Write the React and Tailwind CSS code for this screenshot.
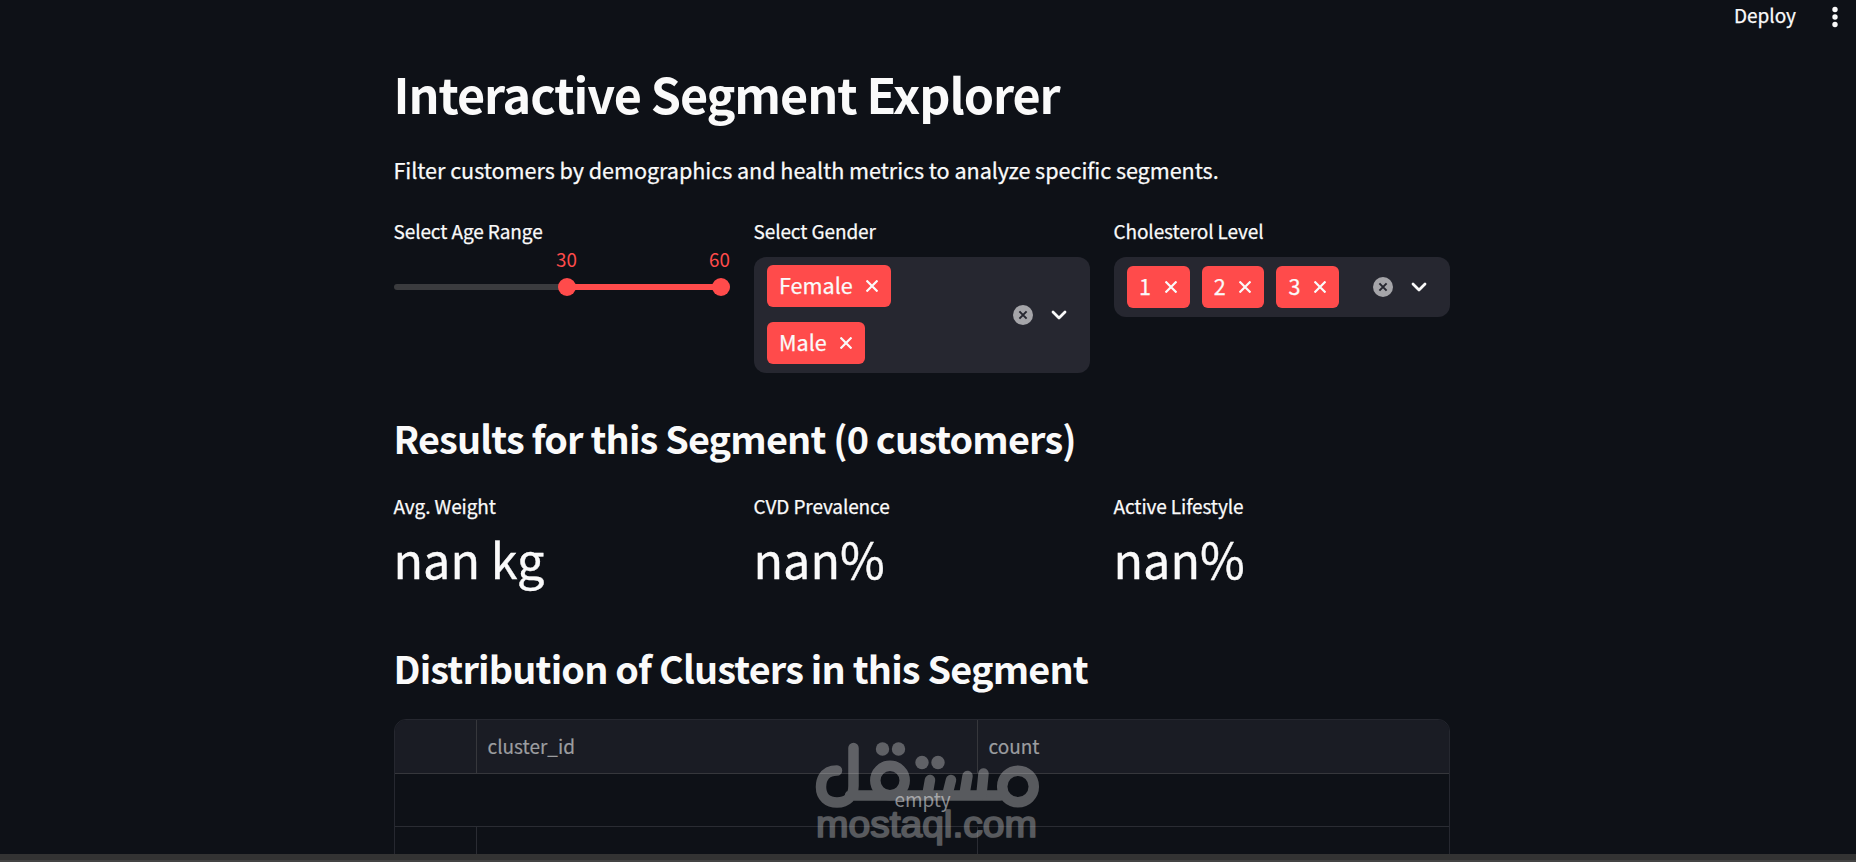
const SANS = "font-['Noto_Sans_CJK_SC','Noto_Sans',sans-serif]";

const genders = ['Female', 'Male'];
const levels = ['1', '2', '3'];
const metrics = [
  { label: 'Avg. Weight', value: 'nan kg' },
  { label: 'CVD Prevalence', value: 'nan%' },
  { label: 'Active Lifestyle', value: 'nan%' },
];

function Label({ children }) {
  return (
    <div className="-ml-[0.5px] h-[25px] text-[19px] leading-[25px] tracking-[-0.1px] whitespace-nowrap [-webkit-text-stroke:0.25px]">
      {children}
    </div>
  );
}

function Tag({ children }) {
  return (
    <span className="flex h-[42px] min-w-[62.7px] items-center justify-between gap-[13px] rounded-md bg-[#ff4b4b] pr-[13px] pl-3 text-[21.6px] [-webkit-text-stroke:0.25px]">
      <span className="h-[42px] leading-[40px]">{children}</span>
      <svg width="12" height="12" viewBox="0 0 12 12" stroke="currentColor" strokeWidth="2.2">
        <path d="M0.500 0.500l11 11M11.500 0.500L0.500 11.500" />
      </svg>
    </span>
  );
}

function SelectIcons() {
  return (
    <div className="flex shrink-0 items-center gap-[18px] pr-[23px]">
      <svg width="20" height="20" viewBox="0 0 20 20">
        <circle cx="10" cy="10" r="10" fill="#a5a5a9" />
        <path d="M6.4 6.4l7.2 7.2M13.6 6.4l-7.2 7.2" stroke="#262730" strokeWidth="2" />
      </svg>
      <svg width="16" height="10" viewBox="0 0 16 10" fill="none" stroke="currentColor" strokeWidth="2.8" strokeLinecap="round" strokeLinejoin="round">
        <path d="M2 2l6 6 6-6" />
      </svg>
    </div>
  );
}

function AgeSlider() {
  return (
    <div>
      <div className="relative h-[27px] text-[18.8px] leading-[25px] text-[#ff4b4b]">
        <span className="absolute -top-[11px] left-[162px]">30</span>
        <span className="absolute -top-[11px] left-[315px]">60</span>
      </div>
      <div className="relative flex h-1.5 rounded-full bg-[#3a3b3e]">
        <div className="ml-[173px] h-1.5 w-[154px] bg-[#ff4b4b]" />
        <span className="absolute -top-1.5 left-[164px] size-[18px] rounded-full bg-[#ff4b4b]" />
        <span className="absolute -top-1.5 left-[318px] size-[18px] rounded-full bg-[#ff4b4b]" />
      </div>
    </div>
  );
}

function Watermark() {
  return (
    <div className="absolute top-[740px] left-[814px] opacity-[0.34]">
      <svg width="226" height="106" viewBox="0 0 226 106" fill="none" stroke="#e6e6e6" strokeWidth="10.5" strokeLinecap="round" strokeLinejoin="round">
        <path d="M23 30.500C8 30.500 7 43 7 47C7 57 14 62.500 23 62.500C33 62.500 39.500 56 39.500 46V8M36 55.500H186" />
        <circle cx="76" cy="40.500" r="14.700" />
        <circle cx="204" cy="46.500" r="15.800" />
        <path d="M113.500 54L116 40M133.500 54L137 40M150.500 54L153.500 36M167.500 54L169.500 33.500" />
        <g fill="#e6e6e6" stroke="none">
          <circle cx="68.500" cy="9" r="6.700" />
          <circle cx="84.500" cy="9" r="6.700" />
          <circle cx="108" cy="22.500" r="6.700" />
          <circle cx="124" cy="22.500" r="6.700" />
        </g>
        <text x="2" y="96.500" fill="#e6e6e6" stroke="#e6e6e6" strokeWidth="1.7" fontFamily="Liberation Sans" fontSize="36" textLength="221" lengthAdjust="spacingAndGlyphs">mostaql.com</text>
      </svg>
    </div>
  );
}

export default function App() {
  return (
    <div className={`relative flex h-[862px] w-full flex-col overflow-hidden bg-[#0e1117] text-[#fafafa] ${SANS}`}>
      <header className="flex h-[30px] shrink-0 items-start justify-end pr-[18px]">
        <span className="text-[19px] leading-[30px] [-webkit-text-stroke:0.25px]">Deploy</span>
        <svg className="mt-[6px] ml-[36px]" width="6" height="22" viewBox="0 0 6 22" fill="currentColor">
          <circle cx="3" cy="3.500" r="2.700" />
          <circle cx="3" cy="11" r="2.700" />
          <circle cx="3" cy="18.500" r="2.700" />
        </svg>
      </header>

      <main className="ml-[393px] w-[1057px] flex-1 overflow-hidden pt-[33px] pl-px">
        <h1 className="-ml-[0.5px] h-[60px] text-[48.5px] leading-[60px] font-bold tracking-[-1.06px] whitespace-nowrap">
          Interactive Segment Explorer
        </h1>
        <p className="-ml-[0.5px] mt-[31px] h-[31px] text-[21.6px] leading-[31px] tracking-[-0.05px] whitespace-nowrap [-webkit-text-stroke:0.25px]">
          Filter customers by demographics and health metrics to analyze specific segments.
        </p>

        <div className="mt-[33px] grid h-[155px] grid-cols-3 items-start gap-6">
          <div>
            <Label>Select Age Range</Label>
            <div className="pt-[14px]">
              <AgeSlider />
            </div>
          </div>
          <div>
            <Label>Select Gender</Label>
            <div className="mt-[14px] flex h-[116px] items-center justify-between rounded-xl bg-[#262730] pl-[13px]">
              <div className="flex flex-col items-start gap-[15px] pb-px">
                {genders.map((g) => <Tag key={g}>{g}</Tag>)}
              </div>
              <SelectIcons />
            </div>
          </div>
          <div>
            <Label>Cholesterol Level</Label>
            <div className="mt-[14px] flex h-[60px] items-center justify-between rounded-xl bg-[#262730] pl-[13px]">
              <div className="flex gap-3">
                {levels.map((l) => <Tag key={l}>{l}</Tag>)}
              </div>
              <SelectIcons />
            </div>
          </div>
        </div>

        <h2 className="-ml-[0.5px] mt-[42px] h-[45px] text-[37.8px] leading-[45px] font-bold tracking-[-0.84px] whitespace-nowrap">
          Results for this Segment (0 customers)
        </h2>
        <div className="mt-[33px] grid grid-cols-3 gap-6">
          {metrics.map((m) => (
            <div key={m.label}>
              <Label>{m.label}</Label>
              <div className="-ml-[0.5px] mt-[10px] h-[60px] text-[48.5px] leading-[60px] [-webkit-text-stroke:0.4px]">{m.value}</div>
            </div>
          ))}
        </div>

        <h2 className="-ml-[0.5px] mt-[57px] h-[45px] text-[37.8px] leading-[45px] font-bold tracking-[-0.82px] whitespace-nowrap">
          Distribution of Clusters in this Segment
        </h2>
        <div className="mt-[29px] h-[200px] overflow-hidden rounded-xl border border-[#262830] text-[19px] text-[#9c9da0]">
          <div className="grid h-[54px] grid-cols-[82px_501px_1fr] border-b border-[#36373c] bg-[#1a1c24] leading-[52px] [-webkit-text-stroke:0.2px]">
            <div className="border-r border-[#36373c]" />
            <div className="border-r border-[#36373c] pl-[10.5px]">cluster_id</div>
            <div className="pl-[10.5px]">count</div>
          </div>
          <div className="h-[53px] border-b border-[#2a2c33] text-center leading-[50px] text-[#85868a]">
            <span className="ml-[1px] tracking-[-0.15px]">empty</span>
          </div>
          <div className="grid h-[53px] grid-cols-[82px_501px_1fr]">
            <div className="border-r border-[#2a2c33]" />
            <div className="border-r border-[#2a2c33]" />
          </div>
        </div>
      </main>

      <footer className="h-2 shrink-0 border-b-2 border-[#444444] bg-[#333333]" />
      <Watermark />
    </div>
  );
}
